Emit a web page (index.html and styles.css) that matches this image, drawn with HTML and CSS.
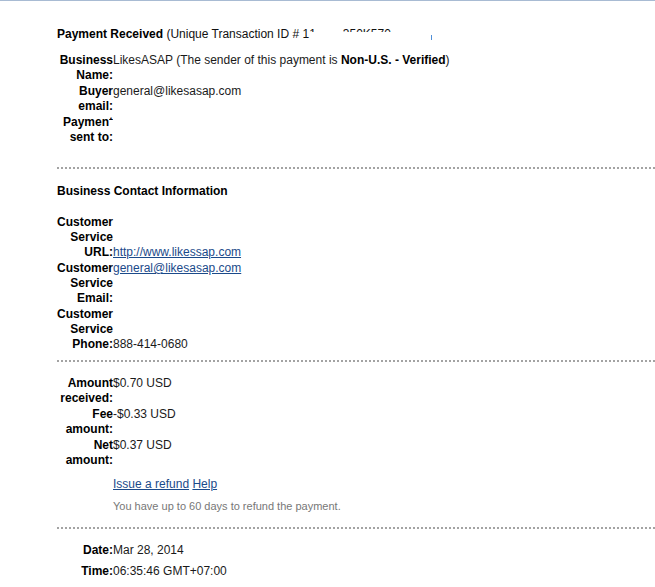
FILE: index.html
```html
<!DOCTYPE html>
<html lang="en">
<head>
<meta charset="utf-8">
<title>Payment Received</title>
<link rel="stylesheet" href="styles.css">
</head>
<body>
<main class="page">
  <section class="sec sec-payment">
    <h1 class="title"><b>Payment Received</b> (Unique Transaction ID # 1<span class="clip">1</span><span class="gap gap-a"></span><span class="clip">350K570</span><span class="gap gap-b"></span><span class="tick"></span></h1>
    <div class="grid grid-payment">
      <div class="lbl">Business Name:</div>
      <div class="val">LikesASAP (The sender of this payment is <b>Non-U.S. - Verified</b>)</div>
      <div class="lbl">Buyer email:</div>
      <div class="val">general@likesasap.com</div>
      <div class="lbl">Paymen<span class="clip">t</span><br>sent to:</div>
      <div class="val"></div>
    </div>
  </section>

  <div class="sep sep-1"></div>

  <section class="sec sec-contact">
    <h2 class="title title-contact"><b>Business Contact Information</b></h2>
    <div class="grid grid-contact">
      <div class="lbl">Customer Service URL:</div>
      <div class="val val-end"><a href="#">http://www.likessap.com</a></div>
      <div class="lbl">Customer Service Email:</div>
      <div class="val"><a href="#">general@likesasap.com</a></div>
      <div class="lbl">Customer Service Phone:</div>
      <div class="val val-end">888-414-0680</div>
    </div>
  </section>

  <div class="sep sep-2"></div>

  <section class="sec sec-amount">
    <div class="grid grid-amount">
      <div class="lbl">Amount received:</div>
      <div class="val">$0.70 USD</div>
      <div class="lbl">Fee amount:</div>
      <div class="val">-$0.33 USD</div>
      <div class="lbl">Net amount:</div>
      <div class="val">$0.37 USD</div>
    </div>
    <div class="links"><a href="#">Issue a refund</a> <a href="#">Help</a></div>
    <div class="note">You have up to 60 days to refund the payment.</div>
  </section>

  <div class="sep sep-3"></div>

  <section class="sec sec-date">
    <div class="grid grid-date">
      <div class="lbl">Date:</div>
      <div class="val">Mar 28, 2014</div>
      <div class="lbl">Time:</div>
      <div class="val">06:35:46 GMT+07:00</div>
    </div>
  </section>
</main>
</body>
</html>
```
FILE: styles.css
```css
html, body {
  margin: 0;
  padding: 0;
  background: #fff;
}

body {
  font-family: "Liberation Sans", Arial, sans-serif;
  font-size: 12px;
  line-height: 15px;
  color: #1a1a1a;
  border-top: 1px solid #a8bbd3;
  overflow: hidden;
}

.page {
  padding: 26px 0 0 57px;
}

.title {
  margin: 0;
  font-size: 12px;
  font-weight: normal;
  line-height: 15px;
  color: #111;
  white-space: nowrap;
}

.title b {
  color: #000;
}

.clip {
  display: inline-block;
  height: 5px;
  overflow: hidden;
  vertical-align: top;
  line-height: 15px;
}

.gap {
  display: inline-block;
}

.gap-a { width: 27px; }
.gap-b { width: 40px; }

.tick {
  display: inline-block;
  width: 1px;
  height: 5px;
  margin-top: 8px;
  vertical-align: top;
  background: #4f8fd8;
}

.grid {
  display: grid;
  grid-template-columns: 56px auto;
  row-gap: 1px;
}

.lbl {
  text-align: right;
  font-weight: bold;
  color: #000;
}

.val {
  color: #1a1a1a;
  white-space: nowrap;
}

.val-end {
  align-self: end;
}

.val b {
  color: #000;
}

a {
  color: #1b4a8a;
  text-decoration: underline;
}

.grid-payment { margin-top: 11px; }

.sep {
  height: 2px;
  background: repeating-linear-gradient(to right, #a3a3a3 0 2px, transparent 2px 4px);
}

.sep-1 { margin-top: 22px; }
.title-contact { margin-top: 15px; }
.grid-contact { margin-top: 16px; }
.sep-2 { margin-top: 8px; }
.grid-amount { margin-top: 14px; }

.links {
  margin-top: 9px;
  padding-left: 56px;
}

.note {
  margin-top: 7px;
  padding-left: 56px;
  font-size: 11px;
  line-height: 15px;
  color: #777;
}

.sep-3 { margin-top: 13px; }

.grid-date {
  margin-top: 14px;
  row-gap: 6px;
}
```
